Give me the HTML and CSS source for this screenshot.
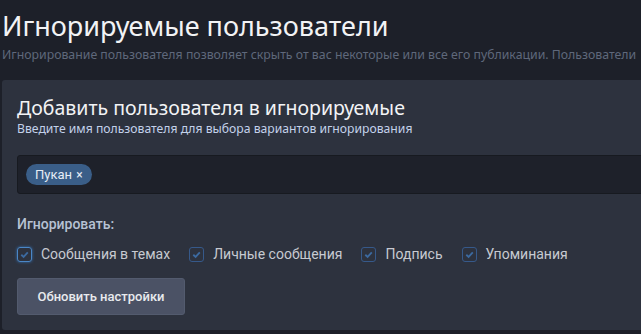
FILE: index.html
```html
<!DOCTYPE html>
<html>
<head>
  <meta charset="UTF-8" />
  <title>Игнорируемые пользователи</title>
  <link rel="stylesheet" href="styles.css">
</head>
<body>
<div class="page">
  <h1 class="page-title">Игнорируемые пользователи</h1>
  <p class="page-desc">Игнорирование пользователя позволяет скрыть от вас некоторые или все его публикации. Пользователи</p>

  <!-- Add user form -->
  <div class="block">
    <h2 class="block-title">Добавить пользователя в игнорируемые</h2>
    <div class="block-hint">Введите имя пользователя для выбора вариантов игнорирования</div>

    <div class="token-input">
      <span class="token">Пукан <span class="token-x">×</span></span>
    </div>

    <div class="ignore-label">Игнорировать:</div>
    <div class="checks">
      <label class="check focused"><span class="box"><svg viewBox="0 0 12 12"><path d="M2.5 6.3 L5 8.6 L9.6 3.6"/></svg></span>Сообщения в темах</label>
      <label class="check"><span class="box"><svg viewBox="0 0 12 12"><path d="M2.5 6.3 L5 8.6 L9.6 3.6"/></svg></span>Личные сообщения</label>
      <label class="check"><span class="box"><svg viewBox="0 0 12 12"><path d="M2.5 6.3 L5 8.6 L9.6 3.6"/></svg></span>Подпись</label>
      <label class="check"><span class="box"><svg viewBox="0 0 12 12"><path d="M2.5 6.3 L5 8.6 L9.6 3.6"/></svg></span>Упоминания</label>
    </div>

    <button class="btn">Обновить настройки</button>
  </div>
</div>
</body>
</html>
```

FILE: styles.css
```css
body {
  margin: 0;
  background: #1d2029;
  font-family: "Noto Sans", sans-serif;
  overflow: hidden;
}
.page {
  padding: 0 0 0 2px;
  width: 800px;
}
.page-title {
  margin: 0;
  padding-top: 6px;
  font-size: 27px;
  font-weight: normal;
  color: #f2f3f5;
  line-height: 40px;
}
.page-desc {
  margin: 0;
  font-size: 12.3px;
  color: #5f687b;
  line-height: 18px;
  white-space: nowrap;
}
.block {
  margin-top: 16px;
  background: #2d323e;
  border-radius: 3px 0 0 3px;
  padding: 15px 0 0 15px;
  height: 250px;
  box-sizing: border-box;
}
.block-title {
  margin: 0;
  font-size: 19.5px;
  font-weight: normal;
  color: #f2f3f5;
  line-height: 26px;
}
.block-hint {
  font-size: 12.2px;
  color: #c3d1ea;
  line-height: 16px;
}
/* Tokenised user input */
.token-input {
  margin-top: 18px;
  height: 39px;
  background: #1e212a;
  border: 1px solid #171a20;
  border-radius: 3px 0 0 3px;
  box-sizing: border-box;
  display: flex;
  align-items: center;
  padding-left: 8px;
}
.token {
  background: #3a5e88;
  color: #e6edf6;
  font-family: Roboto, sans-serif;
  font-size: 13px;
  border-radius: 11px;
  height: 21px;
  line-height: 21px;
  padding: 0 9px;
}
.token-x {
  font-size: 12px;
  margin-left: 1px;
}
.ignore-label {
  margin-top: 21px;
  font-family: Roboto, sans-serif;
  font-size: 14px;
  font-weight: 500;
  color: #b7c2d4;
  line-height: 18px;
}
.checks {
  display: flex;
  gap: 19px;
  margin-top: 12px;
}
.check {
  display: flex;
  align-items: center;
  gap: 9px;
  font-family: Roboto, sans-serif;
  font-size: 14px;
  color: #c7cad1;
  line-height: 18px;
}
.box {
  width: 13px;
  height: 13px;
  border: 1px solid #36598a;
  border-radius: 3px;
  display: flex;
  align-items: center;
  justify-content: center;
}
.focused .box {
  border-color: #4a86c6;
  box-shadow: 0 0 3px #3474b8;
}
.box svg {
  width: 11px;
  height: 11px;
  fill: none;
  stroke: #3c6aa0;
  stroke-width: 2;
}
.btn {
  margin-top: 15px;
  width: 168px;
  height: 37px;
  background: #4b5265;
  border: 1px solid #535b6e;
  border-radius: 3px;
  color: #e8eaee;
  font-family: Roboto, sans-serif;
  font-size: 13px;
  font-weight: 500;
  cursor: pointer;
}
```
